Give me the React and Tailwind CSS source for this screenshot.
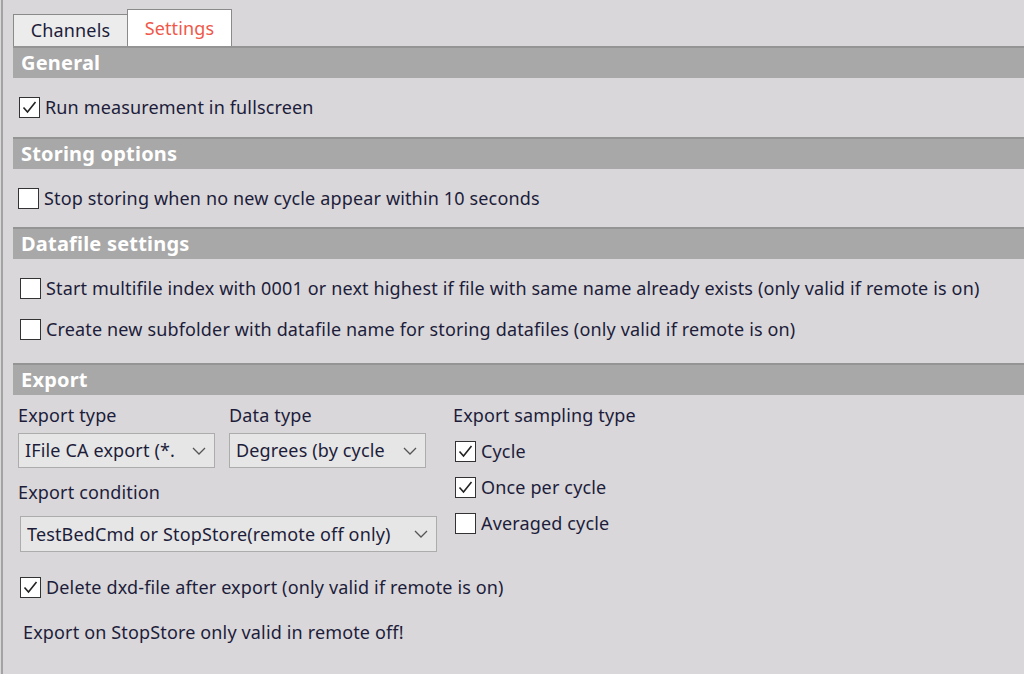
import { useState } from 'react';

const font = { fontFamily: '"Noto Sans", "Open Sans", sans-serif' };

const Check = ({ checked, onChange, label, className = '' }) => (
  <label className={`flex items-center gap-[5px] cursor-default ${className}`}>
    <span
      onClick={onChange}
      className="w-[21px] h-[21px] bg-white border border-[#333333] flex items-center justify-center shrink-0"
    >
      {checked && (
        <svg width="17" height="17" viewBox="0 0 17 17" fill="none">
          <path d="M2.5 8.5l4 4.5 8-10" stroke="#222" strokeWidth="1.6" />
        </svg>
      )}
    </span>
    <span className="text-[#1d1d3a]">{label}</span>
  </label>
);

const Header = ({ title }) => (
  <div className="h-[32px] bg-[#a8a8a8] border-t-2 border-[#949494] flex items-center pl-[8px] text-white font-bold text-[20px] tracking-[0.2px]">
    {title}
  </div>
);

const Combo = ({ value, className = '' }) => (
  <div className={`h-[35px] bg-[#e6e6e6] border border-[#acacac] flex items-center pl-[6px] pr-[8px] ${className}`}>
    <span className="flex-1 overflow-hidden whitespace-nowrap text-[#1d1d3a]">{value}</span>
    <svg width="14" height="8" viewBox="0 0 14 8" fill="none" className="ml-2 shrink-0">
      <path d="M1 1l6 6 6-6" stroke="#555" strokeWidth="1.3" />
    </svg>
  </div>
);

export default function App() {
  const [c, setC] = useState({
    full: true,
    stop: false,
    multi: false,
    sub: false,
    cycle: true,
    once: true,
    avg: false,
    del: true,
  });
  const t = (k) => () => setC({ ...c, [k]: !c[k] });

  return (
    <div className="w-[1024px] h-[674px] bg-[#d9d7da] overflow-hidden flex text-[18px] tracking-[0.15px]" style={font}>
      <div className="w-[2px] bg-[#a3a3a3] ml-[1px]" />
      <div className="flex-1 flex flex-col pl-[10px]">
        {/* tabs */}
        <div className="flex items-end h-[46px]">
          <div className="w-[115px] h-[32px] bg-[#ececec] border border-[#8a8a8a] border-b-0 flex items-center justify-center text-[#1d1d3a]">
            Channels
          </div>
          <div className="w-[105px] h-[37px] bg-white border border-[#8a8a8a] border-b-0 flex items-center justify-center text-[#f0584a] -ml-px">
            Settings
          </div>
        </div>

        <Header title="General" />
        <div className="h-[59px] flex items-center pl-[6px]">
          <Check checked={c.full} onChange={t('full')} label="Run measurement in fullscreen" />
        </div>

        <Header title="Storing options" />
        <div className="h-[58px] flex items-center pl-[5px]">
          <Check checked={c.stop} onChange={t('stop')} label="Stop storing when no new cycle appear within 10 seconds" />
        </div>

        <Header title="Datafile settings" />
        <div className="flex flex-col pl-[7px] pt-[16px] gap-[14px] h-[104px]">
          <Check checked={c.multi} onChange={t('multi')} label="Start multifile index with 0001 or next highest if file with same name already exists (only valid if remote is on)" />
          <Check checked={c.sub} onChange={t('sub')} label="Create new subfolder with datafile name for storing datafiles (only valid if remote is on)" />
        </div>

        <Header title="Export" />
        <div className="flex pl-[5px] pt-[7px]">
          <div className="flex flex-col w-[435px]">
            <div className="flex gap-[14px]">
              <div className="flex flex-col gap-[6px]">
                <span className="text-[#1d1d3a] h-[25px]">Export type</span>
                <Combo value="IFile CA export (*." className="w-[197px]" />
              </div>
              <div className="flex flex-col gap-[6px]">
                <span className="text-[#1d1d3a] h-[25px]">Data type</span>
                <Combo value="Degrees (by cycle" className="w-[197px]" />
              </div>
            </div>
            <span className="text-[#1d1d3a] mt-[11px] h-[25px]">Export condition</span>
            <Combo value="TestBedCmd or StopStore(remote off only)" className="w-[417px] ml-[2px] mt-[12px] h-[36px]" />
          </div>
          <div className="flex flex-col gap-[10px]">
            <span className="text-[#1d1d3a] h-[25px] mb-[1px]">Export sampling type</span>
            <Check checked={c.cycle} onChange={t('cycle')} label="Cycle" className="h-[26px] ml-[2px]" />
            <Check checked={c.once} onChange={t('once')} label="Once per cycle" className="h-[26px] ml-[2px]" />
            <Check checked={c.avg} onChange={t('avg')} label="Averaged cycle" className="h-[26px] ml-[2px]" />
          </div>
        </div>
        <div className="pl-[7px] mt-[22px]">
          <Check checked={c.del} onChange={t('del')} label="Delete dxd-file after export (only valid if remote is on)" />
        </div>
        <div className="pl-[10px] mt-[18px] text-[#1d1d3a]">Export on StopStore only valid in remote off!</div>
      </div>
    </div>
  );
}
